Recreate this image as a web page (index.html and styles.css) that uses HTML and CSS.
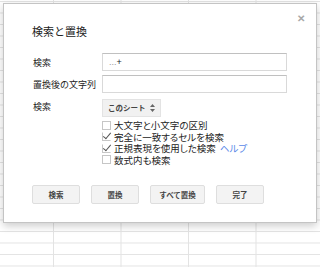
FILE: index.html
```html
<!DOCTYPE html>
<html lang="ja">
  <head>
    <meta charset="UTF-8" />
    <title>検索と置換</title>
    <link rel="stylesheet" href="styles.css">
  </head>
  <body>
    <div class="sheet">
      <div class="dialog">
        <span class="close">&#10005;</span>
        <div class="title">検索と置換</div>

        <div class="form-grid">
          <label class="label">検索</label>
          <div class="field"><span class="dots">...</span>+</div>

          <label class="label">置換後の文字列</label>
          <div class="field"></div>

          <label class="label">検索</label>
          <div>
            <span class="select">このシート
              <svg class="arrows" width="5" height="8" viewBox="0 0 5 8"><path d="M0 3 L2.5 0 L5 3 Z M0 5 L2.5 8 L5 5 Z" fill="#666"/></svg>
            </span>
          </div>
        </div>

        <div class="options">
          <div class="option"><span class="box"></span>大文字と小文字の区別</div>
          <div class="option"><span class="box checked"></span>完全に一致するセルを検索</div>
          <div class="option"><span class="box checked"></span>正規表現を使用した検索 <a class="help">ヘルプ</a></div>
          <div class="option"><span class="box"></span>数式内も検索</div>
        </div>

        <div class="buttons">
          <button class="btn">検索</button>
          <button class="btn">置換</button>
          <button class="btn wide">すべて置換</button>
          <button class="btn">完了</button>
        </div>
      </div>
    </div>
  </body>
</html>
```

FILE: styles.css
```css
*,
*::after,
*::before {
  margin: 0;
  padding: 0;
  box-sizing: border-box;
}

html {
  font-family: "Liberation Sans", "Noto Sans CJK JP", sans-serif;
  color: #222;
}

body {
  width: 320px;
  height: 267px;
  overflow: hidden;
}

/* spreadsheet behind the dialog */
.sheet {
  position: relative;
  width: 320px;
  height: 267px;
  background-color: #fff;
  background-image:
    linear-gradient(to right, #e3e3e3 1px, transparent 1px),
    linear-gradient(to bottom, #e3e3e3 1px, transparent 1px);
  background-size: 67.5px 100%, 100% 11.5px;
  background-position: 53px 0, 0 1px;
}

.dialog {
  position: absolute;
  left: 3px;
  top: 3px;
  width: 314px;
  height: 220px;
  background: #fff;
  border: 1px solid #c4c4c4;
  box-shadow: 0 3px 8px rgba(0, 0, 0, 0.2);
  padding: 0 28px;
}

.close {
  position: absolute;
  top: 9px;
  right: 11px;
  font-size: 10px;
  font-weight: bold;
  color: #a8a8a8;
}

.title {
  margin-top: 20px;
  font-size: 11px;
  line-height: 16px;
  color: #222;
}

.form-grid {
  margin-top: 13px;
  display: grid;
  grid-template-columns: 70px 185px;
  row-gap: 4px;
  align-items: center;
}

.label {
  font-size: 9px;
  padding-left: 1px;
  color: #222;
}

.field {
  height: 18px;
  border: 1px solid #d9d9d9;
  border-top-color: #c0c0c0;
  font-size: 9px;
  line-height: 16px;
  padding-left: 6px;
}

.dots {
  color: #999;
}

.select {
  display: inline-flex;
  align-items: center;
  gap: 4px;
  height: 18px;
  padding: 0 5px 0 5px;
  background: #f1f1f1;
  border: 1px solid #e3e3e3;
  font-size: 7.5px;
  font-weight: bold;
  color: #444;
}

.options {
  margin-top: 3px;
  margin-left: 70px;
  display: flex;
  flex-direction: column;
}

.option {
  display: flex;
  align-items: center;
  gap: 3px;
  height: 11.5px;
  font-size: 9.5px;
  color: #222;
  font-feature-settings: "palt";
}

.box {
  position: relative;
  width: 9px;
  height: 9px;
  border: 1px solid #c6c6c6;
  flex: none;
}

.box.checked {
  border-top-color: transparent;
  border-right-color: transparent;
}

.box.checked::after {
  content: "";
  position: absolute;
  left: 2px;
  top: -2px;
  width: 4px;
  height: 8px;
  border-right: 1px solid #555;
  border-bottom: 1px solid #555;
  transform: rotate(40deg);
}

.help {
  color: #5b8ae8;
  margin-left: 1px;
}

.buttons {
  margin-top: 19px;
  display: flex;
  gap: 11px;
}

.btn {
  font-family: inherit;
  width: 48px;
  height: 19px;
  background: #f3f3f3;
  border: 1px solid #dedede;
  border-radius: 2px;
  font-size: 7.5px;
  font-weight: bold;
  color: #444;
}

.btn.wide {
  width: 55px;
}
```
